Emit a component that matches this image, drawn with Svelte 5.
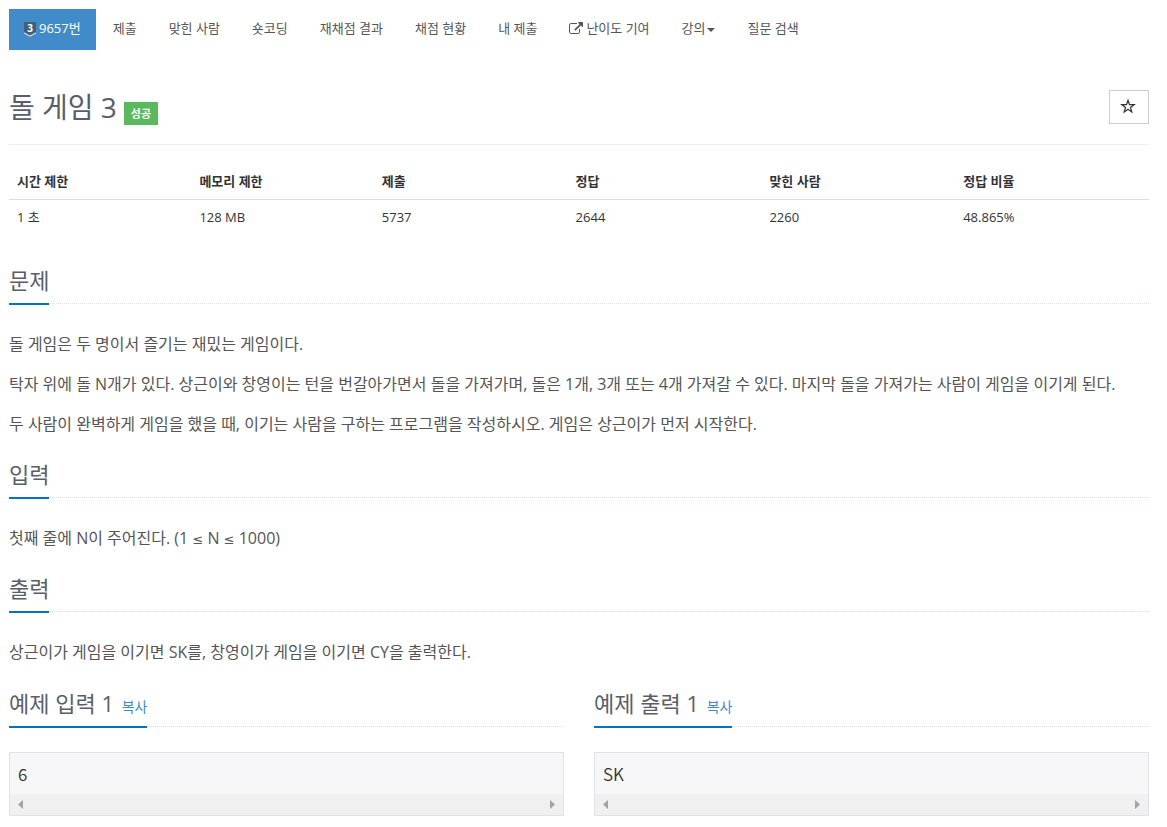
<script>
  const tabs = [
    { label: '제출' },
    { label: '맞힌 사람' },
    { label: '숏코딩' },
    { label: '재채점 결과' },
    { label: '채점 현황' },
    { label: '내 제출' },
    { label: '난이도 기여', icon: 'external' },
    { label: '강의', caret: true },
    { label: '질문 검색' },
  ];

  const info = [
    ['시간 제한', '1 초'],
    ['메모리 제한', '128 MB'],
    ['제출', '5737'],
    ['정답', '2644'],
    ['맞힌 사람', '2260'],
    ['정답 비율', '48.865%'],
  ];

  const sections = [
    {
      title: '문제',
      paragraphs: [
        '돌 게임은 두 명이서 즐기는 재밌는 게임이다.',
        '탁자 위에 돌 N개가 있다. 상근이와 창영이는 턴을 번갈아가면서 돌을 가져가며, 돌은 1개, 3개 또는 4개 가져갈 수 있다. 마지막 돌을 가져가는 사람이 게임을 이기게 된다.',
        '두 사람이 완벽하게 게임을 했을 때, 이기는 사람을 구하는 프로그램을 작성하시오. 게임은 상근이가 먼저 시작한다.',
      ],
    },
    { title: '입력', paragraphs: ['첫째 줄에 N이 주어진다. (1 ≤ N ≤ 1000)'] },
    { title: '출력', paragraphs: ['상근이가 게임을 이기면 SK를, 창영이가 게임을 이기면 CY을 출력한다.'] },
  ];

  const samples = [
    { title: '예제 입력 1', text: '6' },
    { title: '예제 출력 1', text: 'SK' },
  ];

  const panes = [];

  function copy(text) {
    navigator.clipboard?.writeText(text);
  }

  function scroll(i, dx) {
    panes[i]?.scrollBy({ left: dx });
  }
</script>

<div class="page">
  <nav>
    <a class="tab active" href="#problem">
      <svg class="tier" width="12" height="15" viewBox="0 0 12 15" aria-hidden="true">
        <path d="M0 0h12v10.5L6 14.5 0 10.5z" fill="#435f7a" />
        <path d="M0 10.2l6 3.2 6-3.2v1.3l-6 3.3-6-3.3z" fill="#d5e3ef" />
        <text x="6" y="9.5" text-anchor="middle">3</text>
      </svg>
      <span>9657번</span>
    </a>
    {#each tabs as tab}
      <a class="tab" href="#{tab.label}">
        {#if tab.icon}
          <svg width="14" height="13" viewBox="0 0 1792 1664" aria-hidden="true">
            <path
              fill="currentColor"
              d="M1408 928v320q0 119-84.500 203.500t-203.500 84.500h-832q-119 0-203.500-84.500t-84.500-203.500v-832q0-119 84.500-203.500t203.500-84.500h704q14 0 23 9t9 23v64q0 14-9 23t-23 9h-704q-66 0-113 47t-47 113v832q0 66 47 113t113 47h832q66 0 113-47t47-113v-320q0-14 9-23t23-9h64q14 0 23 9t9 23zm384-864v512q0 26-19 45t-45 19-45-19l-176-176-652 652q-10 10-23 10t-23-10l-114-114q-10-10-10-23t10-23l652-652-176-176q-19-19-19-45t19-45 45-19h512q26 0 45 19t19 45z"
            />
          </svg>
        {/if}
        <span>{tab.label}</span>
        {#if tab.caret}<i class="caret"></i>{/if}
      </a>
    {/each}
  </nav>

  <header>
    <div class="title">
      <h1>돌 게임 3</h1>
      <span class="label">성공</span>
    </div>
    <button class="star" aria-label="즐겨찾기">
      <svg width="14" height="14" viewBox="0 0 14 14" aria-hidden="true">
        <path
          d="M6 0.300L7.500 4.600H12.200L8.500 7.400L9.800 11.900L6 9.200L2.200 11.900L3.500 7.400L-0.200 4.600H4.500Z"
          fill="none"
          stroke="#333"
          stroke-width="1.200"
        />
      </svg>
    </button>
  </header>

  <table>
    <thead>
      <tr>
        {#each info as [name]}<th scope="col">{name}</th>{/each}
      </tr>
    </thead>
    <tbody>
      <tr>
        {#each info as [, value]}<td>{value}</td>{/each}
      </tr>
    </tbody>
  </table>

  {#each sections as section}
    <section>
      <div class="headline"><h2>{section.title}</h2></div>
      {#each section.paragraphs as paragraph}
        <p>{#each paragraph.split(/(≤)/) as part}{#if part === '≤'}<span class="relation">{part}</span>{:else}{part}{/if}{/each}</p>
      {/each}
    </section>
  {/each}

  <div class="samples">
    {#each samples as sample, i}
      <section>
        <div class="headline">
          <h2>
            {sample.title}
            <button class="copy" onclick={() => copy(sample.text)}>복사</button>
          </h2>
        </div>
        <div class="sample">
          <pre bind:this={panes[i]}>{sample.text}</pre>
          <div class="track">
            <button aria-label="왼쪽으로" onclick={() => scroll(i, -40)}>
              <svg width="5" height="9" viewBox="0 0 5 9"><path d="M5 0v9L0 4.500z" fill="#a3a3a3" /></svg>
            </button>
            <button aria-label="오른쪽으로" onclick={() => scroll(i, 40)}>
              <svg width="5" height="9" viewBox="0 0 5 9"><path d="M0 0v9l5-4.500z" fill="#a3a3a3" /></svg>
            </button>
          </div>
        </div>
      </section>
    {/each}
  </div>
</div>

<style>
  :global(body) {
    margin: 0;
    background: #fff;
  }

  .page {
    box-sizing: border-box;
    padding: 9px 18px 11px 9px;
    color: #333;
    font-family: 'Open Sans', 'Noto Sans CJK KR', sans-serif;
    font-size: 13px;
    line-height: 19px;
  }

  button {
    padding: 0;
    border: 0;
    background: none;
    font: inherit;
    cursor: pointer;
  }

  nav {
    display: flex;
    flex-wrap: wrap;
    gap: 2px;
  }

  .tab {
    display: flex;
    align-items: center;
    gap: 3px;
    padding: 10px 15px 12px;
    color: #555;
    text-decoration: none;
    white-space: nowrap;
  }

  .tab:has(.caret) {
    gap: 1px;
  }

  .active {
    background: #428bca;
    color: #fff;
  }

  .tier {
    margin-top: 2px;
    overflow: visible;
  }

  .tier text {
    font: 700 10px 'Open Sans', sans-serif;
    fill: #fff;
  }

  .caret {
    margin: 2px 1px 0 0;
    border: 4px solid transparent;
    border-top-color: #555;
    border-bottom: 0;
  }

  header {
    display: flex;
    justify-content: space-between;
    align-items: flex-start;
    margin-top: 40px;
    padding-bottom: 19px;
    border-bottom: 1px solid #eee;
  }

  .title {
    display: flex;
    align-items: flex-end;
    gap: 7px;
  }

  h1,
  h2 {
    margin: 0;
    color: #585f69;
    font-weight: 400;
  }

  h1 {
    font-size: 28px;
    line-height: 35px;
  }

  .label {
    padding: 2px 7px;
    background: #5cb85c;
    color: #fff;
    font-size: 11px;
    font-weight: 700;
  }

  .star {
    display: grid;
    place-items: center;
    box-sizing: border-box;
    width: 40px;
    height: 34px;
    border: 1px solid #ccc;
    background: #fff;
  }

  .star svg {
    overflow: visible;
  }

  table {
    width: 100%;
    margin: 20px 0 30px;
    border-spacing: 0;
    line-height: 18px;
  }

  th,
  td {
    padding: 8px;
    text-align: left;
  }

  th {
    width: 17%;
    padding: 7px 8px 9px;
    border-bottom: 1px solid #ddd;
    font-weight: 700;
  }

  th:nth-child(-n + 2) {
    width: 16%;
  }

  section {
    margin-bottom: 19px;
  }

  .headline {
    display: flex;
    margin-bottom: 25px;
    border-bottom: 1px dotted #dde2e9;
  }

  h2 {
    margin-bottom: -2px;
    padding-bottom: 6px;
    border-bottom: 2px solid #0074c0;
    font-size: 22px;
    line-height: 33px;
  }

  p {
    margin: 0 0 10px;
    color: #555;
    font-size: 16px;
    line-height: 30px;
  }

  p:last-child {
    margin-bottom: 0;
  }

  .relation {
    font-family: 'DejaVu Sans', sans-serif;
    font-size: 13px;
    line-height: 1;
  }

  .samples {
    display: grid;
    grid-template-columns: 1fr 1fr;
    gap: 30px;
    margin-top: 20px;
  }

  .samples section {
    margin-bottom: 0;
  }

  .copy {
    margin-left: 2px;
    color: #428bca;
    font-size: 14px;
    line-height: 20px;
  }

  .sample {
    border: 1px solid #e1e1e8;
    background: #f7f7f9;
  }

  pre {
    margin: 0;
    padding: 8px;
    overflow: hidden;
    font-family: 'Noto Sans CJK KR', sans-serif;
    font-size: 17px;
    font-weight: 350;
    line-height: 25px;
  }

  .track {
    display: flex;
    justify-content: space-between;
    padding: 0 8px;
    background: #f0f0f0;
  }

  .track button {
    display: grid;
    place-items: center;
    height: 21px;
  }
</style>
